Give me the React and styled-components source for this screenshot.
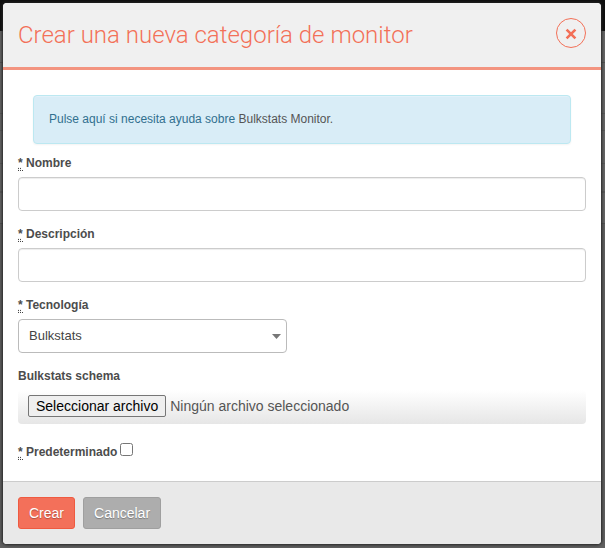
import React, { useState } from "react";
import styled, { createGlobalStyle } from "styled-components";

const GlobalStyle = createGlobalStyle`
  *, *::before, *::after { box-sizing: border-box; }
  body {
    margin: 0;
    min-height: 100vh;
    background: linear-gradient(
      #0f0f0f 31px, #666 31px 62px, #525252 62px 63px, #666 63px 113px,
      #5a5a5a 113px 114px, #666 114px 130px, #5a5a5a 130px 131px, #666 131px 163px,
      #5a5a5a 163px 164px, #666 164px 191px, #5a5a5a 191px 193px, #666 193px 223px,
      #525252 223px 224px, #606060 224px
    );
    color: #555;
    font: 14px/20px "Liberation Sans", Arial, sans-serif;
  }
`;

const Backdrop = styled.div`
  padding: 3px 4px 4px 3px;
`;

const Modal = styled.section`
  background: #fff;
  border-radius: 4px;
  overflow: hidden;
  box-shadow: 0 0 3px 1px #222;
`;

const Header = styled.header`
  display: flex;
  align-items: center;
  justify-content: space-between;
  gap: 12px;
  padding: 15px 15px 19px;
  background: #f0f0f0;
  border-bottom: 3px solid #f39480;
`;

const Title = styled.h1`
  margin: 0;
  padding-top: 4px;
  color: #f37058;
  font: 300 24px/26px Roboto, sans-serif;
`;

const CloseButton = styled.button`
  display: grid;
  place-items: center;
  flex: none;
  width: 30px;
  height: 30px;
  padding: 2px 0 0;
  color: #f37058;
  background: transparent;
  border: 1px solid #f37058;
  border-radius: 50%;
  cursor: pointer;
`;

const Body = styled.div`
  display: flex;
  flex-direction: column;
  padding: 25px 15px 19px;
`;

const HelpNotice = styled.p`
  margin: 0 15px 9px;
  padding: 13px 15px 14px;
  color: #31708f;
  background: #d9edf7;
  border: 1px solid #bce8f1;
  border-radius: 4px;
  box-shadow: 0 1px 2px rgba(0, 0, 0, 0.05), inset 0 1px 0 rgba(255, 255, 255, 0.25);
  font-size: 12px;
`;

const HelpLink = styled.a`
  color: #555;
  text-decoration: none;
`;

const Field = styled.div`
  display: flex;
  flex-direction: column;
  gap: 4px;
  margin-bottom: 13px;
`;

const CheckField = styled.div`
  display: flex;
  align-items: center;
  gap: 3px;
  margin-top: 5px;
`;

const Label = styled.label`
  align-self: flex-start;
  font-size: 12px;
  font-weight: bold;
  line-height: 20px;
  color: #4c4c4c;
`;

const RequiredMark = styled.abbr`
  border-bottom: 1px dotted #444;
  text-decoration: underline dotted;
  cursor: help;
`;

const TextInput = styled.input`
  width: 100%;
  height: 34px;
  padding: 6px 10px;
  color: #555;
  font: inherit;
  background: #fff;
  border: 1px solid #ccc;
  border-radius: 4px;
  box-shadow: inset 0 1px 1px rgba(0, 0, 0, 0.075);
`;

const SelectWrap = styled.div`
  display: grid;
  grid-template-columns: 1fr 10px;
  align-items: center;
  width: 270px;
  max-width: 100%;
  padding-right: 6px;

  > * { grid-row: 1; }
  > svg { grid-column: 2; pointer-events: none; z-index: 1; }
`;

const Select = styled.select`
  grid-column: 1 / -1;
  height: 34px;
  margin-right: -5px;
  padding: 0 28px 0 10px;
  appearance: none;
  color: #444;
  font: 13px/20px "Liberation Sans", Arial, sans-serif;
  background: #fff;
  border: 1px solid #bbb;
  border-radius: 4px;
`;

const FilePicker = styled.label`
  display: flex;
  align-items: center;
  gap: 4px;
  height: 34px;
  padding: 0 10px 2px;
  line-height: 18px;
  background: linear-gradient(#fff, #e6e6e6);
  border-radius: 4px;
  cursor: pointer;
`;

const HiddenFileInput = styled.input`
  position: absolute;
  width: 1px;
  height: 1px;
  overflow: hidden;
  clip-path: inset(50%);
`;

const FileTrigger = styled.span`
  padding: 1px 7px;
  color: #000;
  background: #efefef;
  border: 1px solid #767676;
  border-radius: 2px;

  input:focus-visible + & { outline: 2px solid #f37058; }
`;

const Checkbox = styled.input`
  width: 13px;
  height: 13px;
  margin: 0 0 6px;
`;

const Footer = styled.footer`
  display: flex;
  gap: 8px;
  padding: 15px;
  background: #e9e9e9;
  border-top: 1px solid #ccc;
`;

const tones = {
  primary: { fill: "#f3705a", edge: "#ef5a40" },
  neutral: { fill: "#adadad", edge: "#9f9f9f" },
};

const Button = styled.button`
  height: 32px;
  padding: 0 10px;
  color: #fff;
  font: inherit;
  text-shadow: 0 1px 1px rgba(0, 0, 0, 0.3);
  background: ${({ $tone }) => tones[$tone].fill};
  border: 1px solid ${({ $tone }) => tones[$tone].edge};
  border-radius: 3px;
  cursor: pointer;
`;

function Required() {
  return <RequiredMark title="Obligatorio">*</RequiredMark>;
}

export default function App() {
  const [fileName, setFileName] = useState("");

  return (
    <>
      <GlobalStyle />
      <Backdrop>
        <Modal role="dialog" aria-labelledby="dialog-title">
          <Header>
            <Title id="dialog-title">Crear una nueva categoría de monitor</Title>
            <CloseButton type="button" aria-label="Cerrar">
              <svg width="12" height="12" viewBox="0 0 12 12" aria-hidden="true">
                <path d="M1.6 1.6l8.8 8.8M10.4 1.6l-8.8 8.8" stroke="currentColor" strokeWidth="2.6" />
              </svg>
            </CloseButton>
          </Header>
          <form onSubmit={(event) => event.preventDefault()}>
            <Body>
              <HelpNotice>
                Pulse aquí si necesita ayuda sobre <HelpLink href="#ayuda">Bulkstats Monitor.</HelpLink>
              </HelpNotice>
              <Field>
                <Label htmlFor="name"><Required /> Nombre</Label>
                <TextInput id="name" type="text" />
              </Field>
              <Field>
                <Label htmlFor="description"><Required /> Descripción</Label>
                <TextInput id="description" type="text" />
              </Field>
              <Field>
                <Label htmlFor="technology"><Required /> Tecnología</Label>
                <SelectWrap>
                  <Select id="technology" defaultValue="Bulkstats">
                    <option>Bulkstats</option>
                  </Select>
                  <svg width="9" height="5" viewBox="0 0 9 5" aria-hidden="true">
                    <path d="M0 0h9L4.5 5z" fill="#777" />
                  </svg>
                </SelectWrap>
              </Field>
              <Field>
                <Label htmlFor="schema">Bulkstats schema</Label>
                <FilePicker>
                  <HiddenFileInput
                    id="schema"
                    type="file"
                    onChange={(event) => setFileName(event.target.files[0]?.name ?? "")}
                  />
                  <FileTrigger>Seleccionar archivo</FileTrigger>
                  <span>{fileName || "Ningún archivo seleccionado"}</span>
                </FilePicker>
              </Field>
              <CheckField>
                <Label htmlFor="default"><Required /> Predeterminado</Label>
                <Checkbox id="default" type="checkbox" />
              </CheckField>
            </Body>
            <Footer>
              <Button type="submit" $tone="primary">Crear</Button>
              <Button type="button" $tone="neutral">Cancelar</Button>
            </Footer>
          </form>
        </Modal>
      </Backdrop>
    </>
  );
}
